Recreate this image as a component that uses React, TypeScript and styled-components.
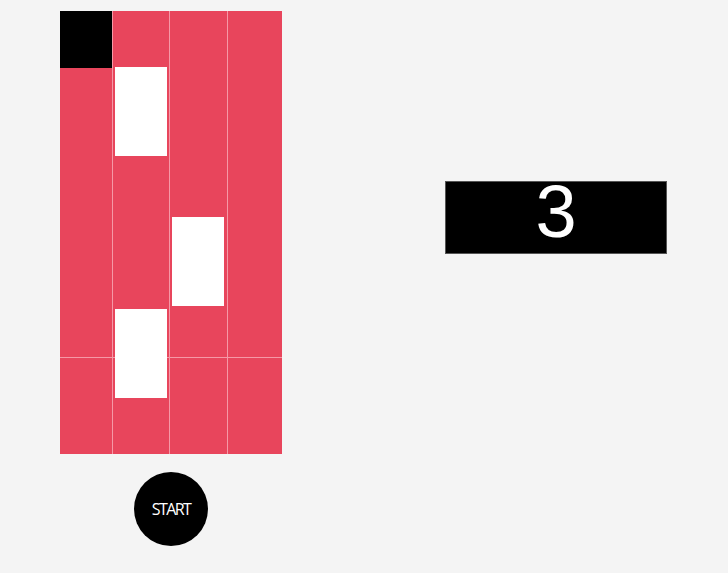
import styled, { createGlobalStyle } from "styled-components";

const GlobalStyle = createGlobalStyle`
  html, body {
    margin: 0;
    padding: 0;
    background: #f4f4f4;
    font-family: "Liberation Sans", Arial, sans-serif;
  }
`;

const Page = styled.div`
  width: 728px;
  height: 573px;
  box-sizing: border-box;
  padding: 11px 61px 0 60px;
  display: flex;
  justify-content: space-between;
  align-items: flex-start;
`;

const GameColumn = styled.div`
  display: flex;
  flex-direction: column;
  align-items: center;
  gap: 18px;
`;

const Board = styled.div`
  position: relative;
  display: grid;
  grid-template-columns: 52px 57px 58px 55px;
  height: 443px;
  background: #e8455c;
`;

const Lane = styled.div<{ $first?: boolean }>`
  position: relative;
  border-left: ${(p) => (p.$first ? "none" : "1px solid #f598a6")};
`;

const HitLine = styled.div`
  position: absolute;
  left: 0;
  right: 0;
  top: 346px;
  height: 1px;
  background: #f598a6;
`;

const Tile = styled.div<{ $black?: boolean }>`
  position: absolute;
  z-index: 1;
  left: ${(p) => (p.$black ? "0" : "2px")};
  width: 52px;
  height: ${(p) => (p.$black ? "57px" : "89px")};
  background: ${(p) => (p.$black ? "#000" : "#fff")};
`;

const StartButton = styled.button`
  width: 74px;
  height: 74px;
  border-radius: 50%;
  border: none;
  background: #000;
  color: #fff;
  font-family: "Open Sans", sans-serif;
  font-size: 16px;
  font-weight: 500;
  letter-spacing: -1.6px;
  padding: 0;
  cursor: pointer;
`;

const ScoreBox = styled.div`
  margin-top: 170px;
  width: 222px;
  height: 73px;
  box-sizing: border-box;
  border: 1px solid #555;
  background: #000;
  color: #fff;
  font-family: "Liberation Sans", Arial, sans-serif;
  font-size: 74px;
  line-height: 60px;
  text-align: center;
`;

const lanes: { top: number; black?: boolean }[][] = [
  [{ top: 0, black: true }],
  [{ top: 56 }, { top: 298 }],
  [{ top: 206 }],
  [],
];

export default function App() {
  return (
    <>
      <GlobalStyle />
      <Page>
        <GameColumn>
          <Board>
            {lanes.map((tiles, i) => (
              <Lane key={i} $first={i === 0}>
                {tiles.map((t, j) => (
                  <Tile key={j} $black={t.black} style={{ top: t.top }} />
                ))}
              </Lane>
            ))}
            <HitLine />
          </Board>
          <StartButton>START</StartButton>
        </GameColumn>
        <ScoreBox>3</ScoreBox>
      </Page>
    </>
  );
}
